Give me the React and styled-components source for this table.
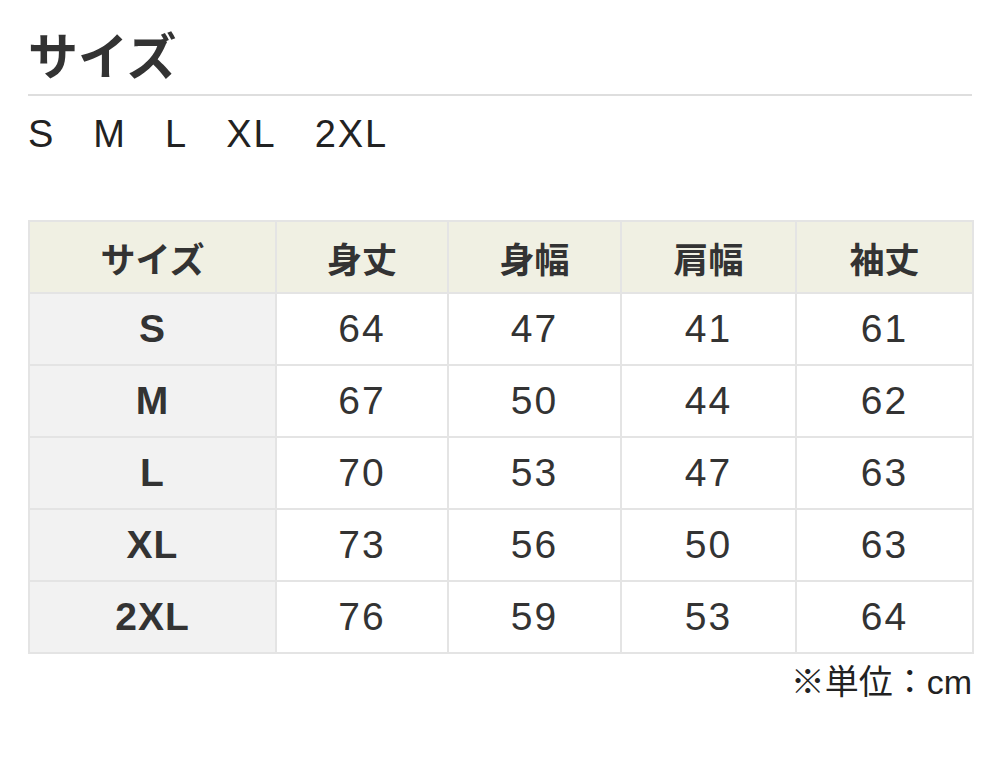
import React from "react";
import styled, { createGlobalStyle } from "styled-components";

const Global = createGlobalStyle`
  html, body { margin: 0; padding: 0; background: #fff; }
  body { font-family: "Liberation Sans", "Noto Sans CJK JP", sans-serif; color: #333; }
`;

const Page = styled.div`
  padding: 21px 28px 40px;
`;

const Title = styled.h2`
  margin: 0;
  font-size: 50px;
  line-height: 64px;
  font-weight: 700;
  color: #333;
  font-family: "Noto Sans CJK JP", sans-serif;
  padding-bottom: 9px;
  border-bottom: 2px solid #dedede;
`;

const SizeList = styled.div`
  display: flex;
  gap: 38px;
  margin-top: 16px;
  font-size: 38px;
  letter-spacing: 2px;
  line-height: 44px;
  color: #222;
`;

const Table = styled.table`
  margin-top: 64px;
  width: 100%;
  border-collapse: collapse;
  table-layout: fixed;
  border: 2px solid #e4e4e4;
`;

const Th = styled.th`
  height: 70px;
  border: 2px solid #e4e4e4;
  background: #f0f0e3;
  font-family: "Noto Sans CJK JP", sans-serif;
  font-size: 35px;
  font-weight: 700;
  color: #333;
  text-align: center;
  padding: 0;
`;

const Td = styled.td`
  height: 70px;
  border: 2px solid #e4e4e4;
  background: ${(p) => (p.$head ? "#f2f2f2" : "#fff")};
  font-size: 39px;
  letter-spacing: ${(p) => (p.$head ? "1px" : "2px")};
  font-weight: ${(p) => (p.$head ? 700 : 400)};
  color: #333;
  text-align: center;
  padding: 0;
`;

const Note = styled.div`
  text-align: right;
  margin-top: 6px;
  font-size: 34px;
  line-height: 44px;
  color: #222;
  font-family: "Liberation Sans", "Noto Sans CJK JP", sans-serif;
`;

const headers = ["サイズ", "身丈", "身幅", "肩幅", "袖丈"];
const widths = [247, 172, 173, 175, 177];
const rows = [
  ["S", 64, 47, 41, 61],
  ["M", 67, 50, 44, 62],
  ["L", 70, 53, 47, 63],
  ["XL", 73, 56, 50, 63],
  ["2XL", 76, 59, 53, 64],
];

export default function App() {
  return (
    <Page>
      <Global />
      <Title>サイズ</Title>
      <SizeList>
        {["S", "M", "L", "XL", "2XL"].map((s) => (
          <span key={s}>{s}</span>
        ))}
      </SizeList>
      <Table>
        <colgroup>
          {widths.map((w, i) => (
            <col key={i} style={{ width: w }} />
          ))}
        </colgroup>
        <thead>
          <tr>
            {headers.map((h) => (
              <Th key={h}>{h}</Th>
            ))}
          </tr>
        </thead>
        <tbody>
          {rows.map((r) => (
            <tr key={r[0]}>
              {r.map((c, i) => (
                <Td key={i} $head={i === 0}>
                  {c}
                </Td>
              ))}
            </tr>
          ))}
        </tbody>
      </Table>
      <Note>※単位：cm</Note>
    </Page>
  );
}
